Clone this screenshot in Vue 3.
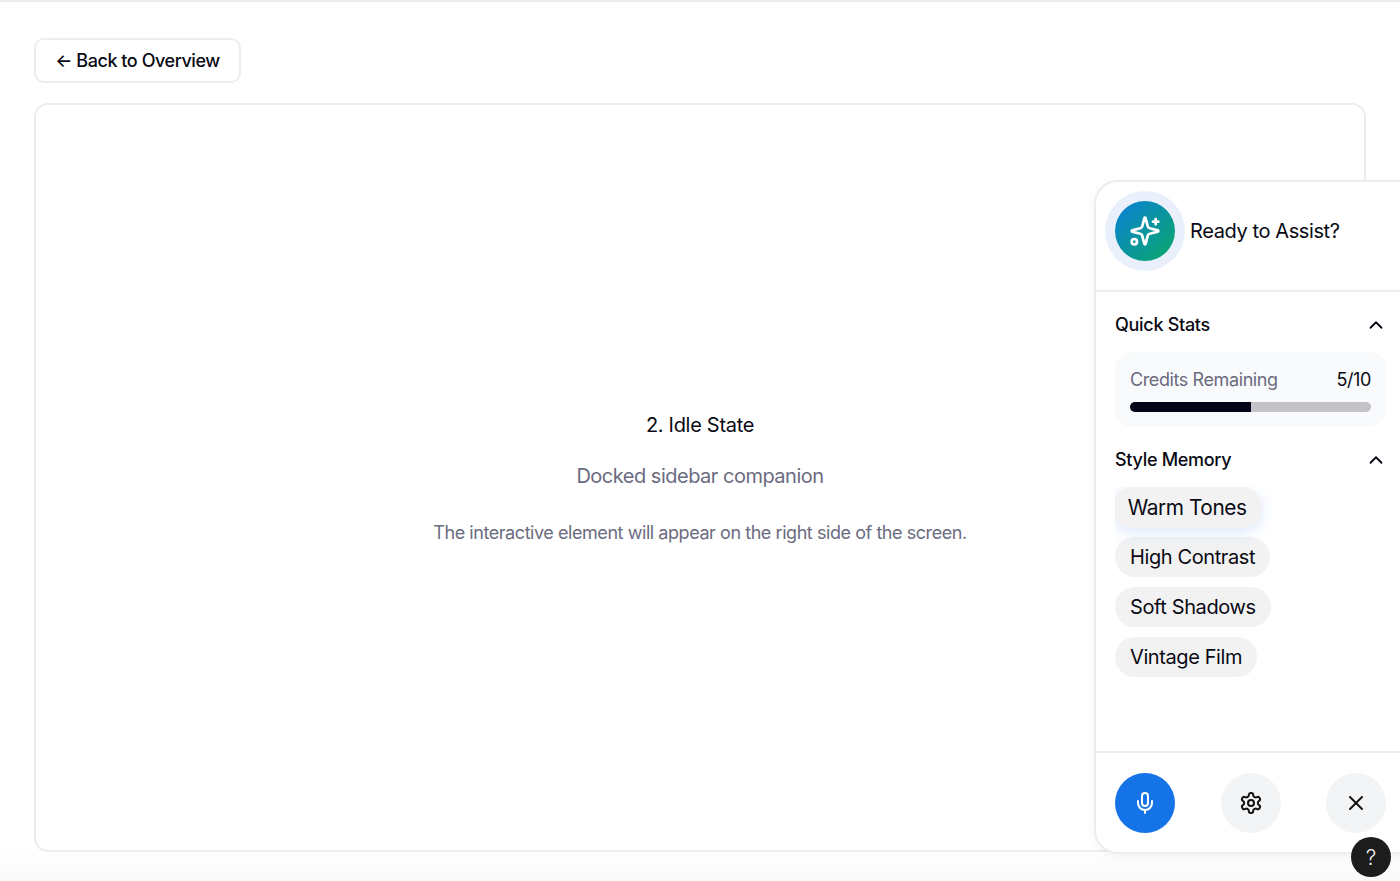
<script setup>
const chips = ['Warm Tones', 'High Contrast', 'Soft Shadows', 'Vintage Film']
</script>

<template>
  <div class="page">
    <main class="main">
      <button class="back">← Back to Overview</button>
      <section class="card">
        <h2>2. Idle State</h2>
        <p class="sub">Docked sidebar companion</p>
        <p class="desc">The interactive element will appear on the right side of the screen.</p>
      </section>
    </main>

    <aside class="panel">
      <header class="head">
        <div class="avatar">
          <svg width="32" height="32" viewBox="0 0 24 24" fill="none" stroke="#fff" stroke-width="2" stroke-linecap="round" stroke-linejoin="round">
            <path d="M9.94 15.5A2 2 0 0 0 8.5 14.06l-6.14-1.58a.5.5 0 0 1 0-.96L8.5 9.94A2 2 0 0 0 9.94 8.5l1.58-6.14a.5.5 0 0 1 .96 0L14.06 8.5A2 2 0 0 0 15.5 9.94l6.14 1.58a.5.5 0 0 1 0 .96L15.5 14.06a2 2 0 0 0-1.44 1.44l-1.58 6.14a.5.5 0 0 1-.96 0z" />
            <path d="M20 3v4" /><path d="M22 5h-4" /><circle cx="4" cy="20" r="2" />
          </svg>
        </div>
        <span class="title">Ready to Assist?</span>
      </header>

      <div class="body">
        <div class="sec-head first">
          <span>Quick Stats</span>
          <svg class="chev" width="22" height="22" viewBox="0 0 24 24" fill="none" stroke="currentColor" stroke-width="2" stroke-linecap="round" stroke-linejoin="round"><path d="m18 15-6-6-6 6" /></svg>
        </div>
        <div class="stats">
          <div class="stats-row"><span class="label">Credits Remaining</span><span class="val">5/10</span></div>
          <div class="track"><div class="fill" :style="{ width: '50%' }"></div></div>
        </div>
        <div class="sec-head second">
          <span>Style Memory</span>
          <svg class="chev" width="22" height="22" viewBox="0 0 24 24" fill="none" stroke="currentColor" stroke-width="2" stroke-linecap="round" stroke-linejoin="round"><path d="m18 15-6-6-6 6" /></svg>
        </div>
        <div class="chips">
          <div v-for="(c, i) in chips" :key="c" class="chip" :class="{ hot: i === 0 }">{{ c }}</div>
        </div>
      </div>

      <footer class="foot">
        <button class="round blue">
          <svg width="24" height="24" viewBox="0 0 24 24" fill="none" stroke="#fff" stroke-width="2" stroke-linecap="round" stroke-linejoin="round"><path d="M12 2a3 3 0 0 0-3 3v7a3 3 0 0 0 6 0V5a3 3 0 0 0-3-3Z" /><path d="M19 10v2a7 7 0 0 1-14 0v-2" /><line x1="12" x2="12" y1="19" y2="22" /></svg>
        </button>
        <button class="round">
          <svg width="24" height="24" viewBox="0 0 24 24" fill="none" stroke="#111" stroke-width="2" stroke-linecap="round" stroke-linejoin="round"><path d="M12.22 2h-.44a2 2 0 0 0-2 2v.18a2 2 0 0 1-1 1.73l-.43.25a2 2 0 0 1-2 0l-.15-.08a2 2 0 0 0-2.73.73l-.22.38a2 2 0 0 0 .73 2.73l.15.1a2 2 0 0 1 1 1.72v.51a2 2 0 0 1-1 1.74l-.15.09a2 2 0 0 0-.73 2.73l.22.38a2 2 0 0 0 2.73.73l.15-.08a2 2 0 0 1 2 0l.43.25a2 2 0 0 1 1 1.73V20a2 2 0 0 0 2 2h.44a2 2 0 0 0 2-2v-.18a2 2 0 0 1 1-1.73l.43-.25a2 2 0 0 1 2 0l.15.08a2 2 0 0 0 2.73-.73l.22-.39a2 2 0 0 0-.73-2.73l-.15-.08a2 2 0 0 1-1-1.74v-.5a2 2 0 0 1 1-1.74l.15-.09a2 2 0 0 0 .73-2.73l-.22-.38a2 2 0 0 0-2.73-.73l-.15.08a2 2 0 0 1-2 0l-.43-.25a2 2 0 0 1-1-1.73V4a2 2 0 0 0-2-2z" /><circle cx="12" cy="12" r="3" /></svg>
        </button>
        <button class="round">
          <svg width="24" height="24" viewBox="0 0 24 24" fill="none" stroke="#111" stroke-width="2" stroke-linecap="round" stroke-linejoin="round"><path d="M18 6 6 18" /><path d="m6 6 12 12" /></svg>
        </button>
      </footer>
    </aside>

    <button class="help">?</button>
  </div>
</template>

<style scoped>
.page {
  position: relative;
  height: 881px;
  overflow: hidden;
  box-sizing: border-box;
  border-top: 2px solid #ececec;
  background: linear-gradient(to bottom, #fff 0, #fff 846px, #f9f9f9 879px);
  font-family: Inter, "Liberation Sans", sans-serif;
  color: #0a0a14;
}
.main {
  padding: 36px 34px 0;
  display: flex;
  flex-direction: column;
  align-items: flex-start;
  gap: 20px;
}
.back {
  height: 45px;
  width: 207px;
  box-sizing: border-box;
  padding: 0;
  white-space: nowrap;
  background: #fff;
  border: 2px solid #ededed;
  border-radius: 10px;
  font: 500 18px Inter, "Liberation Sans", sans-serif;
  letter-spacing: -0.45px;
  color: #0a0a14;
}
.card {
  box-sizing: border-box;
  width: 1332px;
  height: 749px;
  padding-top: 2px;
  border: 2px solid #ededed;
  border-radius: 14px;
  background: #fff;
  display: flex;
  flex-direction: column;
  align-items: center;
  justify-content: center;
  text-align: center;
}
.card h2 {
  margin: 0 0 23px;
  font-size: 20px;
  line-height: 28px;
  font-weight: 400;
  letter-spacing: -0.3px;
}
.sub {
  margin: 0 0 29px;
  font-size: 20px;
  line-height: 28px;
  letter-spacing: -0.5px;
  color: #6b6b80;
}
.desc {
  margin: 0;
  font-size: 18px;
  line-height: 28px;
  letter-spacing: -0.44px;
  color: #6b6b80;
}
.panel {
  position: absolute;
  left: 1094px;
  top: 178px;
  width: 311px;
  height: 674px;
  box-sizing: border-box;
  display: flex;
  flex-direction: column;
  background: #fff;
  border: 2px solid #ededed;
  border-right: 0;
  border-radius: 24px 0 0 24px;
  box-shadow: 0 2px 10px rgba(0, 0, 0, .05);
}
.head {
  height: 110px;
  flex: none;
  box-sizing: border-box;
  display: flex;
  align-items: flex-start;
  padding: 19px 0 0 19px;
  gap: 15px;
  border-bottom: 2px solid #eeeef2;
}
.avatar {
  width: 60px;
  height: 60px;
  flex: none;
  border-radius: 50%;
  display: flex;
  align-items: center;
  justify-content: center;
  background: linear-gradient(135deg, #0a7fd8, #0ba968);
  box-shadow: 0 0 0 10px #e9effb;
}
.title {
  font-size: 20px;
  line-height: 60px;
  font-weight: 400;
  letter-spacing: -0.4px;
}
.body {
  flex: 1;
  padding: 0 19px;
  min-height: 0;
}
.sec-head {
  display: flex;
  justify-content: space-between;
  align-items: center;
  font-size: 18px;
  font-weight: 500;
  letter-spacing: -0.3px;
  line-height: 26px;
}
.chev { margin-right: -1px; }
.sec-head.first { margin-top: 20px; margin-bottom: 14px; }
.sec-head.second { margin-top: 20px; margin-bottom: 14px; }
.stats {
  box-sizing: border-box;
  height: 75px;
  border-radius: 16px;
  background: #f9fafb;
  padding: 15px;
}
.stats-row {
  display: flex;
  justify-content: space-between;
  font-size: 18px;
  line-height: 26px;
  letter-spacing: -0.4px;
}
.label { color: #6b6b80; }
.track {
  height: 10px;
  margin-top: 9px;
  border-radius: 5px;
  background: #c4c4c8;
  overflow: hidden;
}
.fill {
  height: 100%;
  background: #05051a;
}
.chips {
  overflow: hidden;
  display: flex;
  flex-direction: column;
  align-items: flex-start;
  gap: 10px;
  padding: 0 40px 8px 0;
}
.chip {
  height: 40px;
  line-height: 40px;
  padding: 0 15px;
  border-radius: 20px;
  background: #f2f2f3;
  font-size: 20px;
  letter-spacing: -0.4px;
  white-space: nowrap;
}
.chip.hot {
  transform: translateY(.5px) scale(1.04);
  box-shadow: 0 4px 14px rgba(59, 130, 246, .18);
}
.foot {
  height: 101px;
  flex: none;
  box-sizing: border-box;
  border-top: 2px solid #eeeef2;
  display: flex;
  justify-content: space-between;
  padding: 20px 19px 0 19px;
}
.round {
  width: 60px;
  height: 60px;
  padding: 0;
  border: 0;
  border-radius: 50%;
  background: #f3f4f6;
  display: flex;
  align-items: center;
  justify-content: center;
}
.round.blue { background: #1473e6; }
.help {
  position: absolute;
  left: 1351px;
  top: 835px;
  width: 40px;
  height: 40px;
  padding: 0;
  border: 0;
  border-radius: 50%;
  background: #1c1c1c;
  color: #f2f2f2;
  font: 300 21px Inter, "Liberation Sans", sans-serif;
}
</style>
